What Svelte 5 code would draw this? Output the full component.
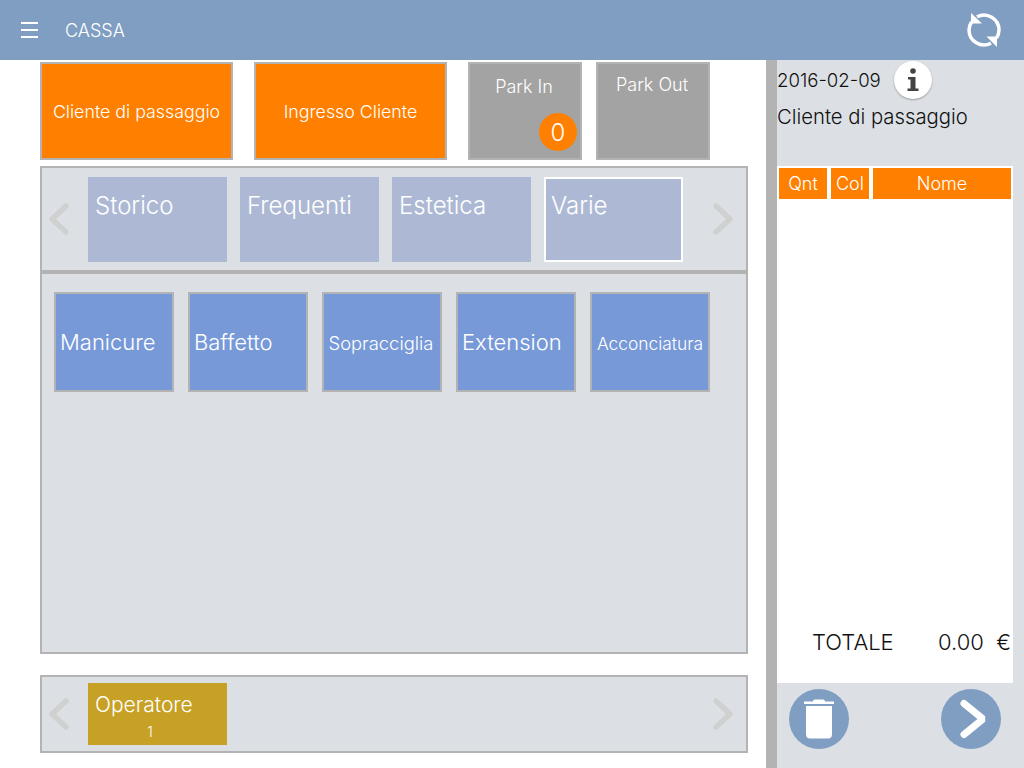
<script>
    let tabs = ["Storico", "Frequenti", "Estetica", "Varie"];
    let items = [
        { name: "Manicure" },
        { name: "Baffetto" },
        { name: "Sopracciglia", size: "mid" },
        { name: "Extension" },
        { name: "Acconciatura", size: "small" }
    ];
</script>

<div class="page">
    <header>
        <div class="burger"><span></span><span></span><span></span></div>
        <div class="title">CASSA</div>
        <svg class="sync" width="38" height="38" viewBox="0 0 38 38">
            <path d="M12 5.8 A15 15 0 0 1 34 19 A15 15 0 0 1 31.5 27" fill="none" stroke="#fff" stroke-width="3.5"/>
            <path d="M26 32.2 A15 15 0 0 1 4 19 A15 15 0 0 1 6.5 11" fill="none" stroke="#fff" stroke-width="3.5"/>
            <path d="M6 2 L6 12.5 L17 12.5 Z" fill="#fff"/>
            <path d="M32 36 L32 25.5 L21.5 25.5 Z" fill="#fff"/>
        </svg>
    </header>

    <div class="main">
        <div class="left">
            <div class="actions">
                <div class="action orange">Cliente di passaggio</div>
                <div class="action orange second">Ingresso Cliente</div>
                <div class="action park park-in">
                    Park In
                    <span class="badge">0</span>
                </div>
                <div class="action park park-out">Park Out</div>
            </div>

            <div class="tabs">
                <svg class="chevron" width="22" height="34" viewBox="0 0 22 34"><path d="M18 4 L4 17 L18 30" fill="none" stroke="#cfd1d1" stroke-width="5.5" stroke-linecap="round" stroke-linejoin="round"/></svg>
                <div class="tab-list">
                    {#each tabs as tab, i}
                        <div class="tab" class:active={i === 3}>{tab}</div>
                    {/each}
                </div>
                <svg class="chevron" width="22" height="34" viewBox="0 0 22 34"><path d="M4 4 L18 17 L4 30" fill="none" stroke="#cfd1d1" stroke-width="5.5" stroke-linecap="round" stroke-linejoin="round"/></svg>
            </div>

            <div class="items">
                {#each items as item}
                    <div class="item {item.size ?? ''}">{item.name}</div>
                {/each}
            </div>

            <div class="operators">
                <svg class="chevron" width="22" height="34" viewBox="0 0 22 34"><path d="M18 4 L4 17 L18 30" fill="none" stroke="#cfd1d1" stroke-width="5.5" stroke-linecap="round" stroke-linejoin="round"/></svg>
                <div class="operator">
                    <div>Operatore</div>
                    <div class="op-num">1</div>
                </div>
                <svg class="chevron" width="22" height="34" viewBox="0 0 22 34"><path d="M4 4 L18 17 L4 30" fill="none" stroke="#cfd1d1" stroke-width="5.5" stroke-linecap="round" stroke-linejoin="round"/></svg>
            </div>
        </div>

        <div class="divider"></div>

        <aside>
            <div class="date-row">
                <span class="date">2016-02-09</span>
                <div class="info">
                    <svg width="12" height="24" viewBox="0 0 12 24">
                        <circle cx="6" cy="3" r="2.8" fill="#444"/>
                        <path d="M1 9 H8.5 V20.5 H11.5 V23 H0.5 V20.5 H3.5 V11.5 H1 Z" fill="#444"/>
                    </svg>
                </div>
            </div>
            <div class="customer">Cliente di passaggio</div>

            <div class="ticket">
                <div class="ticket-head">
                    <div class="qnt">Qnt</div>
                    <div class="col">Col</div>
                    <div class="nome">Nome</div>
                </div>
                <div class="total">
                    <span class="total-label">TOTALE</span>
                    <span>0.00&nbsp; €</span>
                </div>
            </div>

            <div class="bottom">
                <div class="round">
                    <svg width="30" height="40" viewBox="0 0 30 40">
                        <path d="M9 2.5 Q9 0.5 11 0.5 H19 Q21 0.5 21 2.5 H30 V5 H0 V2.5 Z" fill="#fff"/>
                        <path d="M2 7 H28 V35 Q28 39.5 24 39.5 H6 Q2 39.5 2 35 Z" fill="#fff"/>
                    </svg>
                </div>
                <div class="round">
                    <svg width="30" height="42" viewBox="0 0 30 42">
                        <path d="M8 5.5 L27 21 L8 36.5" fill="none" stroke="#fff" stroke-width="7" stroke-linecap="round" stroke-linejoin="bevel"/>
                    </svg>
                </div>
            </div>
        </aside>
    </div>
</div>

<style>
    :global(body) {
        margin: 0;
        background: #fff;
    }

    .page {
        width: 1024px;
        height: 768px;
        overflow: hidden;
        font-family: Inter, "Liberation Sans", sans-serif;
        font-weight: 300;
    }

    header {
        height: 60px;
        background: #7f9ec2;
        display: flex;
        align-items: center;
        padding: 0 21px;
        box-sizing: border-box;
        color: #fff;
    }

    .burger {
        width: 17px;
        display: flex;
        flex-direction: column;
        gap: 5px;
    }

    .burger span {
        height: 2px;
        background: #fff;
    }

    .title {
        margin-left: 27px;
        font-size: 18px;
    }

    .sync {
        margin-left: auto;
        margin-right: 0;
    }

    .main {
        display: flex;
        height: 708px;
    }

    .left {
        width: 766px;
        padding: 2px 0 0 40px;
        box-sizing: border-box;
    }

    .actions {
        display: flex;
        height: 98px;
    }

    .action {
        box-sizing: border-box;
        border: 2px solid #b3b3b3;
        color: #fff;
        font-size: 18px;
        display: flex;
        justify-content: center;
    }

    .orange {
        width: 193px;
        background: #ff8000;
        align-items: center;
        font-size: 17.8px;
    }

    .second {
        margin-left: 21px;
    }

    .park {
        width: 114px;
        background: #a3a3a3;
        position: relative;
        margin-left: 21px;
        padding-right: 2px;
    }

    .park-in {
        padding-top: 12px;
    }

    .park-out {
        margin-left: 14px;
        padding-top: 10px;
    }

    .badge {
        position: absolute;
        left: 69px;
        top: 49px;
        width: 38px;
        height: 38px;
        border-radius: 50%;
        background: #ff8000;
        font-size: 24px;
        display: flex;
        align-items: center;
        justify-content: center;
    }

    .tabs {
        margin-top: 6px;
        width: 708px;
        height: 106px;
        box-sizing: border-box;
        border: 2px solid #b3b3b3;
        background: #dce0e5;
        display: flex;
        align-items: center;
        padding: 0 12px 0 6px;
    }

    .tab-list {
        display: flex;
        gap: 13px;
        align-self: flex-start;
        margin-top: 9px;
        margin-right: auto;
        margin-left: 18px;
    }

    .tab {
        width: 139px;
        height: 85px;
        box-sizing: border-box;
        background: #adb9d4;
        color: #fff;
        font-size: 24px;
        padding: 14px 7px;
    }

    .tab.active {
        border: 2px solid #fff;
        padding: 12px 5px;
    }

    .items {
        width: 708px;
        height: 382px;
        box-sizing: border-box;
        border: 2px solid #b3b3b3;
        background: #dce0e5;
        display: flex;
        gap: 14px;
        padding: 18px 12px;
        align-items: flex-start;
    }

    .item {
        width: 120px;
        height: 100px;
        box-sizing: border-box;
        border: 2px solid #b3b3b3;
        background: #7799d8;
        color: #fff;
        font-size: 22px;
        display: flex;
        align-items: center;
        padding-left: 4px;
    }

    .item.mid {
        font-size: 18.4px;
        justify-content: center;
        padding: 2px 2px 0 0;
    }

    .item.small {
        font-size: 17.4px;
        justify-content: center;
        padding: 2px 0 0;
    }

    .operators {
        margin-top: 21px;
        width: 708px;
        height: 78px;
        box-sizing: border-box;
        border: 2px solid #b3b3b3;
        background: #dce0e5;
        display: flex;
        align-items: center;
        padding: 0 12px 0 6px;
    }

    .operator {
        width: 139px;
        height: 62px;
        margin-left: 18px;
        margin-right: auto;
        box-sizing: border-box;
        background: #c7a125;
        color: #fff;
        font-size: 21px;
        padding: 9px 22px 0 7px;
    }

    .op-num {
        font-size: 14px;
        text-align: center;
        margin-top: 6px;
    }

    .divider {
        width: 11px;
        background: #b3b3b3;
    }

    aside {
        flex: 1;
        background: #dce0e5;
        color: #111;
        display: flex;
        flex-direction: column;
    }

    .date-row {
        display: flex;
        align-items: center;
        height: 40px;
    }

    .date {
        font-size: 18.6px;
    }

    .info {
        width: 38px;
        height: 38px;
        margin-left: 13px;
        border-radius: 50%;
        background: #fff;
        box-shadow: 0 1px 2px rgba(0, 0, 0, 0.3);
        display: flex;
        align-items: center;
        justify-content: center;
    }

    .customer {
        font-size: 20.3px;
        margin-top: 4px;
        height: 62px;
    }

    .ticket {
        width: 236px;
        height: 517px;
        background: #fff;
        box-sizing: border-box;
        padding: 2px;
        display: flex;
        flex-direction: column;
    }

    .ticket-head {
        display: flex;
        gap: 4px;
        height: 31px;
        color: #fff;
        font-size: 18px;
    }

    .ticket-head div {
        background: #ff8000;
        display: flex;
        align-items: center;
        justify-content: center;
    }

    .qnt {
        width: 48px;
    }

    .col {
        width: 38px;
    }

    .nome {
        flex: 1;
    }

    .total {
        margin-top: auto;
        margin-bottom: 26px;
        display: flex;
        justify-content: space-between;
        font-size: 22px;
        padding-left: 33px;
    }

    .bottom {
        display: flex;
        justify-content: space-between;
        padding: 6px 23px 0 12px;
    }

    .round {
        width: 60px;
        height: 60px;
        border-radius: 50%;
        background: #7f9ec2;
        display: flex;
        align-items: center;
        justify-content: center;
    }
</style>
